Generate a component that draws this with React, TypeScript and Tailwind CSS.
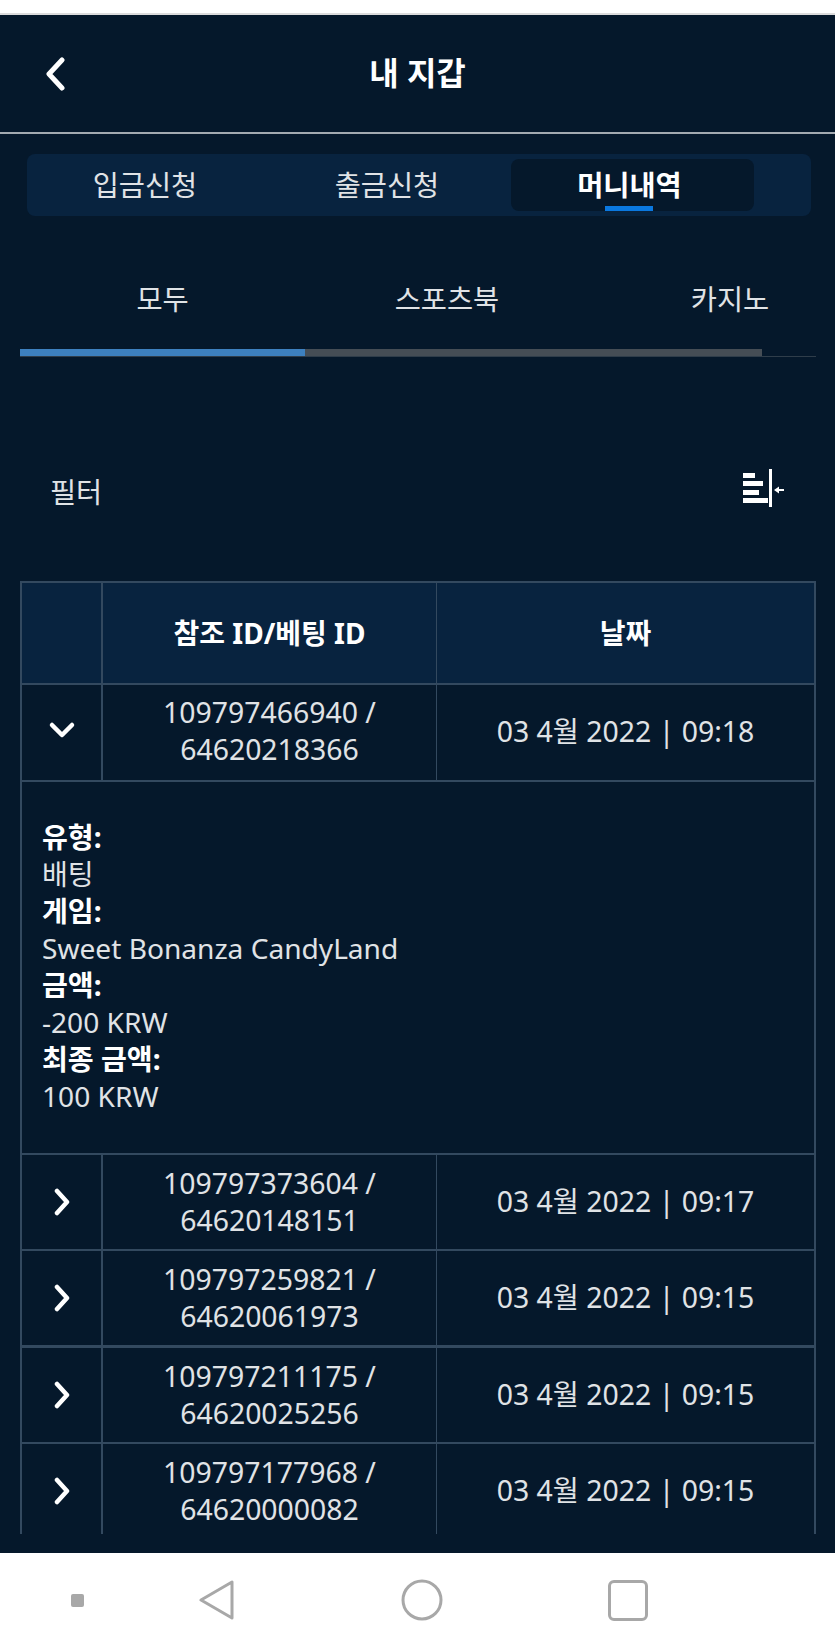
import React from "react";

const rows = [
  ["109797373604 /", "64620148151", "03 4월 2022 | 09:17"],
  ["109797259821 /", "64620061973", "03 4월 2022 | 09:15"],
  ["109797211175 /", "64620025256", "03 4월 2022 | 09:15"],
  ["109797177968 /", "64620000082", "03 4월 2022 | 09:15"],
];

function Chevron({ dir }: { dir: "left" | "right" | "down" }) {
  if (dir === "left")
    return (
      <svg width="24" height="34" viewBox="0 0 24 34" fill="none" stroke="#fff" strokeWidth="5" strokeLinecap="round" strokeLinejoin="round">
        <path d="M18 3 L5 17 L18 31" />
      </svg>
    );
  if (dir === "right")
    return (
      <svg width="20" height="28" viewBox="0 0 20 28" fill="none" stroke="#fff" strokeWidth="4.5" strokeLinecap="round" strokeLinejoin="round">
        <path d="M5 3 L15 14 L5 25" />
      </svg>
    );
  return (
    <svg width="28" height="18" viewBox="0 0 28 18" fill="none" stroke="#fff" strokeWidth="4.5" strokeLinecap="round" strokeLinejoin="round">
      <path d="M4 4 L14 14 L24 4" />
    </svg>
  );
}

function Row({ a, b, c, thick }: { a: string; b: string; c: string; thick?: boolean }) {
  return (
    <div
      className={
        thick
          ? "grid grid-cols-[81px_334px_1fr] h-[97px] border-t-[3px] border-[#33495f]"
          : "grid grid-cols-[81px_334px_1fr] h-[96px] border-t-2 border-[#33495f]"
      }
    >
      <div className="flex items-center justify-center border-r-2 border-[#33495f]">
        <Chevron dir="right" />
      </div>
      <div className="flex flex-col items-center justify-center border-r border-[#33495f] leading-[37px] text-[#e0e3e6]">
        <span>{a}</span>
        <span>{b}</span>
      </div>
      <div className="flex items-center justify-center text-[#e0e3e6]">{c}</div>
    </div>
  );
}

export default function App() {
  return (
    <div className="w-[835px] h-[1650px] bg-white flex flex-col overflow-hidden font-['Noto_Sans','Noto_Sans_CJK_KR',sans-serif] text-[28.4px]">
      <div className="h-[15px] bg-white border-b-2 border-[#dcdcdc]" />
      <div className="h-[1538px] bg-[#05182b] flex flex-col">
        <header className="h-[119px] flex items-center justify-between pl-[44px] pr-[44px] border-b-2 border-[#a3aab1]">
          <Chevron dir="left" />
          <h1 className="flex-1 text-center text-white font-bold text-[32px] pr-[24px] pb-[2px]">내 지갑</h1>
        </header>
        <div className="mt-[20px] ml-[27px] mr-[24px] h-[62px] bg-[#08233f] rounded-lg grid grid-cols-[242px_242px_243px_1fr] items-stretch py-[5px]">
          <div className="flex items-center justify-center text-[#e0e3e6] pr-[6px]">입금신청</div>
          <div className="flex items-center justify-center text-[#e0e3e6] pr-[6px]">출금신청</div>
          <div className="relative flex items-center justify-center font-bold text-white bg-[#05182b] rounded-lg pr-[6px]">
            머니내역
            <span className="absolute bottom-0 left-[94px] w-[48px] h-[5px] bg-[#0a78e0]" />
          </div>
        </div>
        <div className="mt-[62px] ml-[20px] mr-[19px] flex text-[#e0e3e6] overflow-hidden">
          <div className="w-[285px] shrink-0 text-center">모두</div>
          <div className="w-[284px] shrink-0 text-center">스포츠북</div>
          <div className="w-[282px] shrink-0 text-center whitespace-nowrap">카지노</div>
        </div>
        <div className="mt-[28px] ml-[20px] mr-[19px] h-[8px] flex border-b border-[#2f3d4a]">
          <div className="w-[285px] bg-[#3d80bf]" />
          <div className="w-[457px] bg-[#454d55]" />
        </div>
        <div className="mt-[116px] ml-[50px] mr-[50px] h-[40px] flex items-center justify-between text-[#e0e3e6]">
          <span>필터</span>
          <svg className="-mt-[8px]" width="42" height="40" viewBox="0 0 42 40" fill="#fff">
            <rect x="0" y="4" width="12" height="5" />
            <rect x="0" y="12" width="20" height="5" />
            <rect x="0" y="21" width="16" height="5" />
            <rect x="0" y="29" width="25" height="5" />
            <rect x="26" y="0" width="3" height="38" />
            <rect x="34" y="20" width="7" height="2" />
            <path d="M31 21 L36 17.5 V24.5 Z" />
          </svg>
        </div>
        <div className="mt-[68px] ml-[20px] mr-[19px] h-[953px] overflow-hidden border-x-2 border-[#33495f] border-t-2 box-border">
          <div className="grid grid-cols-[81px_334px_1fr] h-[100px] bg-[#08233f] font-bold text-white text-[28px]">
            <div className="border-r-2 border-[#33495f]" />
            <div className="flex items-center justify-center border-r border-[#33495f]">참조 ID/베팅 ID</div>
            <div className="flex items-center justify-center">날짜</div>
          </div>
          <div className="grid grid-cols-[81px_334px_1fr] h-[97px] border-t-2 border-[#33495f]">
            <div className="flex items-center justify-center border-r-2 border-[#33495f] pb-[4px]">
              <Chevron dir="down" />
            </div>
            <div className="flex flex-col items-center justify-center border-r border-[#33495f] leading-[37px] text-[#e0e3e6] pb-[3px]">
              <span>109797466940 /</span>
              <span>64620218366</span>
            </div>
            <div className="flex items-center justify-center text-[#e0e3e6] pb-[1px]">03 4월 2022 | 09:18</div>
          </div>
          <div className="h-[373px] border-t-2 border-[#33495f] pt-[37px] pl-[20px] leading-[37px] text-[#e0e3e6] text-[28.1px]">
            <div className="font-bold text-white">유형:</div>
            <div>배팅</div>
            <div className="font-bold text-white">게임:</div>
            <div>Sweet Bonanza CandyLand</div>
            <div className="font-bold text-white">금액:</div>
            <div>-200 KRW</div>
            <div className="font-bold text-white">최종 금액:</div>
            <div>100 KRW</div>
          </div>
          {rows.map((r, i) => (
            <Row key={r[0]} a={r[0]} b={r[1]} c={r[2]} thick={i === 2} />
          ))}
        </div>
      </div>
      <nav className="flex-1 bg-white flex items-center pb-[3px]">
        <div className="w-[13px] h-[13px] ml-[71px] bg-[#a8a8a8] rounded-[2px]" />
        <svg className="ml-[115px]" width="36" height="42" viewBox="0 0 36 42" fill="none" stroke="#a8a8a8" strokeWidth="3" strokeLinejoin="round">
          <path d="M33 3 V39 L2 21 Z" />
        </svg>
        <svg className="ml-[166px]" width="42" height="42" viewBox="0 0 42 42" fill="none" stroke="#a8a8a8" strokeWidth="3">
          <circle cx="21" cy="21" r="19" />
        </svg>
        <div className="w-[40px] h-[41px] ml-[165px] border-[3px] border-[#a8a8a8] rounded-[6px]" />
      </nav>
    </div>
  );
}
